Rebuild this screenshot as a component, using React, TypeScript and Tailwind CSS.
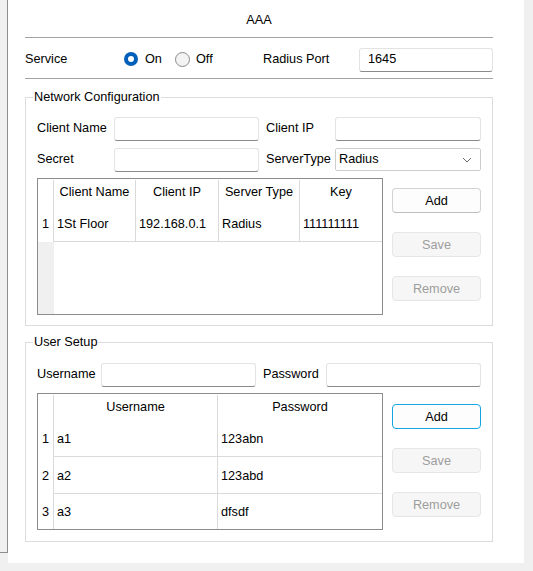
import React from 'react'

const netRows = [
  { n: 1, name: '1St Floor', ip: '192.168.0.1', type: 'Radius', key: '111111111' },
]

const users = [
  { n: 1, user: 'a1', pass: '123abn' },
  { n: 2, user: 'a2', pass: '123abd' },
  { n: 3, user: 'a3', pass: 'dfsdf' },
]

function TextBox({ className = '', value = '' }: { className?: string; value?: string }) {
  return (
    <div
      className={`h-[24px] bg-white border border-[#e3e3e3] border-b-[#8a8a8a] rounded-[3px] flex items-center px-[6px] ${className}`}
    >
      {value}
    </div>
  )
}

function Btn({ label, disabled, focused }: { label: string; disabled?: boolean; focused?: boolean }) {
  const look = disabled
    ? 'bg-[#f6f6f6] border-[#e6e6e6] text-[#9d9d9d]'
    : focused
      ? 'bg-[#fdfdfd] border-[#15a5e3] text-black'
      : 'bg-[#fdfdfd] border-[#d3d3d3] border-b-[#bdbdbd] text-black'
  return (
    <div className={`h-[25px] w-[89px] rounded-[4px] border flex items-center justify-center pt-[3px] ${look}`}>
      {label}
    </div>
  )
}

function GroupBox({ title, className = '', children }: { title: string; className?: string; children: React.ReactNode }) {
  return (
    <div className={`relative border border-[#dcdcdc] px-[11px] ${className}`}>
      <span className="absolute -top-[9px] left-[7px] px-[1px] bg-white leading-[16px]">{title}</span>
      {children}
    </div>
  )
}

export default function App() {
  return (
    <div className="w-[533px] h-[571px] bg-[#f0f0f0] flex items-start font-['Liberation_Sans',Arial,sans-serif] text-[12.7px] text-black overflow-hidden">
      {/* edge of the neighbouring panel */}
      <div className="w-[8px] h-[553px] shrink-0 border-r border-b border-[#8d8d8d]" />

      <div className="w-[516px] h-[563px] shrink-0 bg-white pl-[17px] pr-[31px]">
        <div className="h-[37px] pt-[5px] flex items-center justify-center">AAA</div>
        <div className="h-[1px] bg-[#a3a3a3]" />

        {/* service row */}
        <div className="h-[40px] pt-[3px] flex items-center">
          <div className="w-[99px] pt-[1px]">Service</div>
          <div className="w-[139px] flex items-center">
            <span className="w-[14px] h-[14px] rounded-full bg-[#005fb8] flex items-center justify-center">
              <span className="w-[6px] h-[6px] rounded-full bg-white" />
            </span>
            <span className="ml-[7px] w-[30px] pt-[1px]">On</span>
            <span className="w-[15px] h-[15px] rounded-full border border-[#8a8a8a] bg-[#f3f3f3]" />
            <span className="ml-[6px] pt-[1px]">Off</span>
          </div>
          <div className="w-[96px] pt-[1px]">Radius Port</div>
          <TextBox className="w-[134px] px-[8px] pt-[1px]" value="1645" />
        </div>
        <div className="h-[1px] bg-[#a3a3a3]" />

        {/* network configuration */}
        <GroupBox title="Network Configuration" className="mt-[18px] pt-[18px] pb-[10px]">
          <div className="flex flex-col gap-[7px]">
            <div className="flex items-center h-[24px] pt-[1px]">
              <div className="w-[77px]">Client Name</div>
              <TextBox className="w-[145px]" />
              <div className="w-[69px] ml-[7px]">Client IP</div>
              <TextBox className="w-[146px]" />
            </div>
            <div className="flex items-center h-[24px] pt-[1px]">
              <div className="w-[77px]">Secret</div>
              <TextBox className="w-[145px]" />
              <div className="w-[69px] ml-[7px]">ServerType</div>
              <div className="w-[146px] h-[23px] border border-[#cdcdcd] rounded-[2px] flex items-center justify-between pl-[3px] pr-[8px]">
                <span>Radius</span>
                <svg width="10" height="6" viewBox="0 0 10 6" fill="none">
                  <path d="M1 1l4 4 4-4" stroke="#6b6b6b" strokeWidth="1" />
                </svg>
              </div>
            </div>
          </div>

          <div className="flex mt-[7px]">
            <div className="w-[346px] h-[137px] border border-[#8c8c8c] flex flex-col">
              <div className="h-[26px] flex pt-[1px]">
                <div className="w-[16px] border-r border-[#dadada]" />
                <div className="w-[82px] border-r border-[#dadada] flex items-center justify-center">Client Name</div>
                <div className="w-[83px] border-r border-[#dadada] flex items-center justify-center">Client IP</div>
                <div className="w-[81px] border-r border-[#dadada] flex items-center justify-center">Server Type</div>
                <div className="w-[82px] flex items-center justify-center">Key</div>
              </div>
              {netRows.map(r => (
                <div key={r.n} className="h-[37px] flex">
                  <div className="w-[16px] border-r border-[#dadada] flex items-center justify-center pt-[3px]">{r.n}</div>
                  <div className="w-[82px] border-r border-b border-[#dadada] flex items-center px-[3px] pt-[3px]">{r.name}</div>
                  <div className="w-[83px] border-r border-b border-[#dadada] flex items-center px-[3px] pt-[3px]">{r.ip}</div>
                  <div className="w-[81px] border-r border-b border-[#dadada] flex items-center px-[3px] pt-[3px]">{r.type}</div>
                  <div className="w-[82px] border-b border-[#dadada] flex items-center px-[3px] pt-[3px]">{r.key}</div>
                </div>
              ))}
              <div className="flex-1 flex">
                <div className="w-[16px] bg-[#f0f0f0]" />
              </div>
            </div>
            <div className="ml-[9px] pt-[10px] flex flex-col gap-[19px]">
              <Btn label="Add" />
              <Btn label="Save" disabled />
              <Btn label="Remove" disabled />
            </div>
          </div>
        </GroupBox>

        {/* user setup */}
        <GroupBox title="User Setup" className="mt-[16px] pt-[19px] pb-[11px]">
          <div className="flex items-center h-[24px] pt-[1px]">
            <div className="w-[64px]">Username</div>
            <TextBox className="w-[155px]" />
            <div className="w-[63px] ml-[7px]">Password</div>
            <TextBox className="w-[155px]" />
          </div>

          <div className="flex mt-[7px]">
            <div className="w-[346px] h-[137px] border border-[#8c8c8c] flex flex-col">
              <div className="h-[26px] flex pt-[1px]">
                <div className="w-[16px] border-r border-[#dadada]" />
                <div className="w-[164px] border-r border-[#dadada] flex items-center justify-center">Username</div>
                <div className="w-[164px] flex items-center justify-center">Password</div>
              </div>
              {users.map((u, i) => (
                <div key={u.n} className={`${i === users.length - 1 ? 'h-[35px]' : 'h-[37px]'} flex`}>
                  <div className="w-[16px] border-r border-[#dadada] flex items-center justify-center pt-[3px]">{u.n}</div>
                  <div className={`w-[164px] border-r border-[#dadada] flex items-center px-[3px] pt-[3px] ${i === users.length - 1 ? '' : 'border-b'}`}>{u.user}</div>
                  <div className={`w-[164px] border-[#dadada] flex items-center px-[3px] pt-[3px] ${i === users.length - 1 ? '' : 'border-b'}`}>{u.pass}</div>
                </div>
              ))}
            </div>
            <div className="ml-[9px] pt-[11px] flex flex-col gap-[19px]">
              <Btn label="Add" focused />
              <Btn label="Save" disabled />
              <Btn label="Remove" disabled />
            </div>
          </div>
        </GroupBox>
      </div>
    </div>
  )
}
